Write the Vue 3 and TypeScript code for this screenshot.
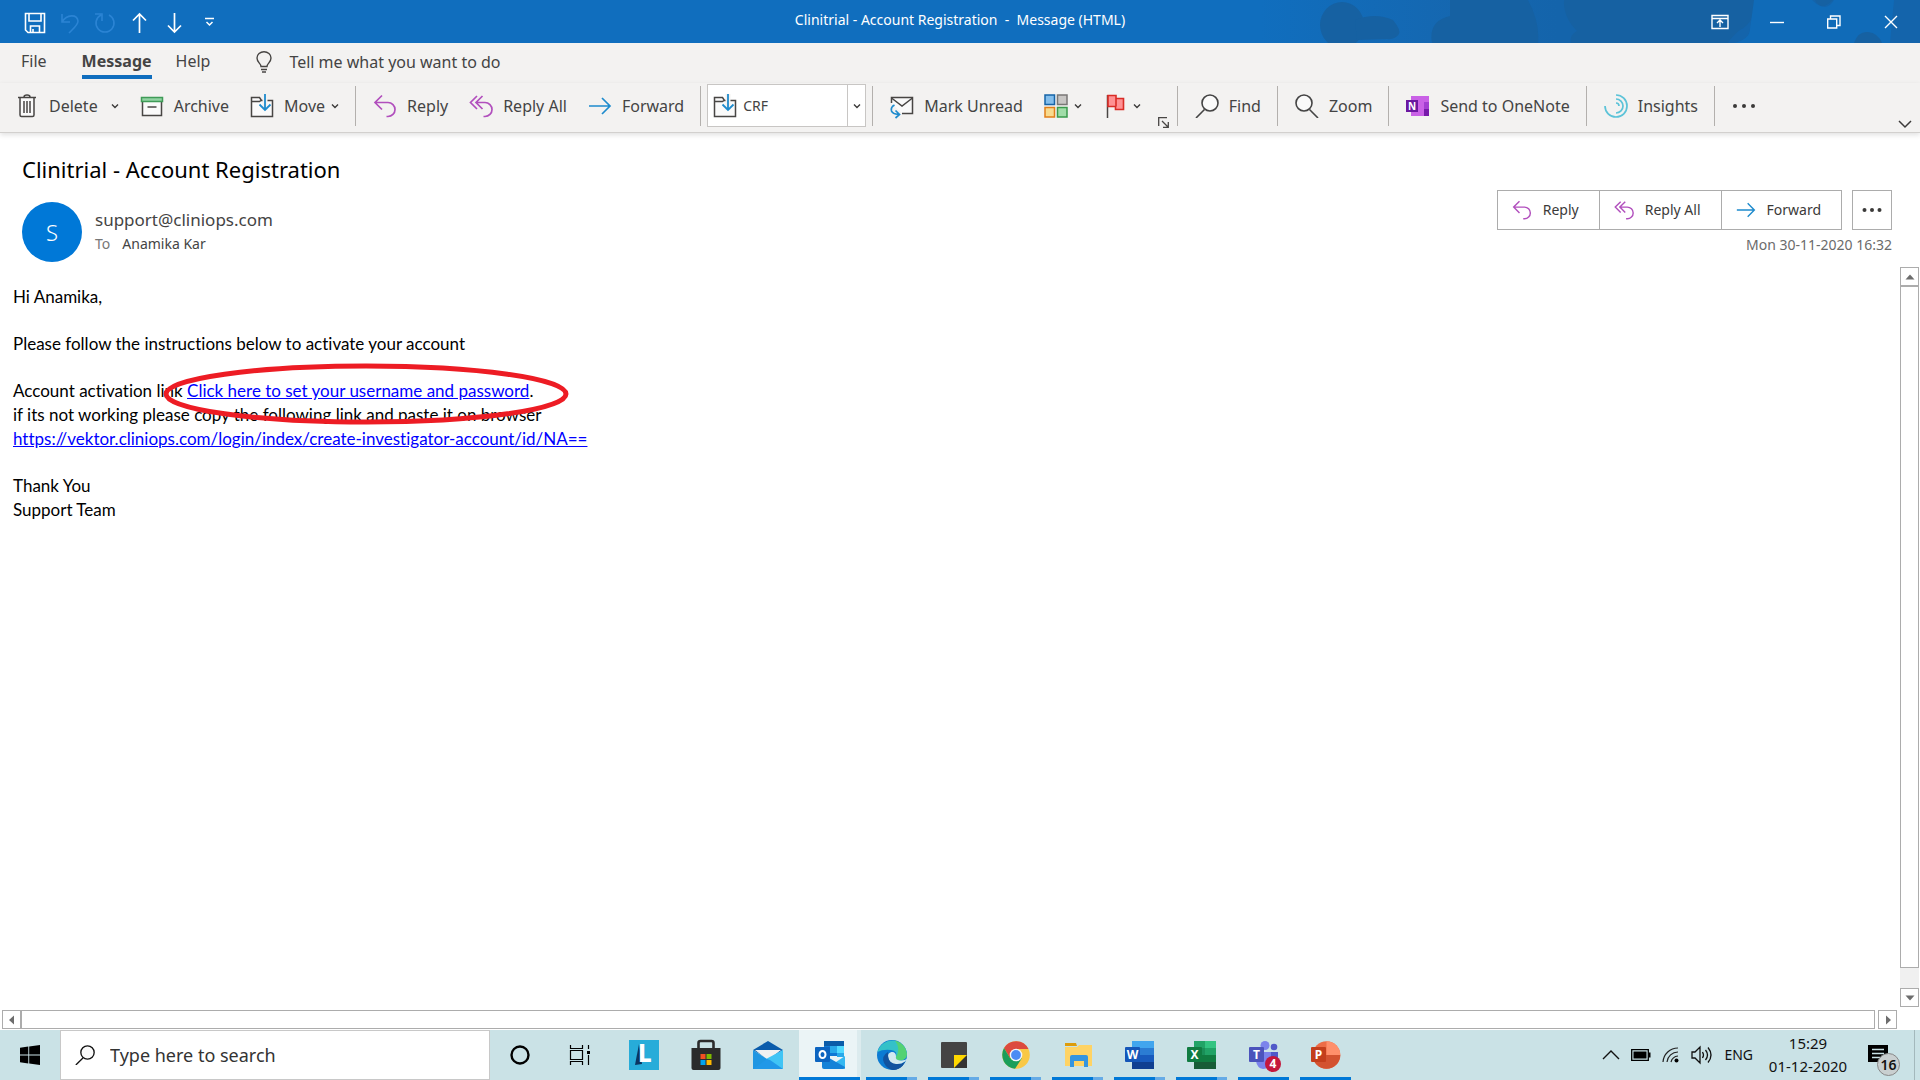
<script setup lang="ts">
interface TaskApp {
  id: string
  label: string
  state: 'idle' | 'active' | 'open' | 'stacked'
}

const taskApps: TaskApp[] = [
  { id: 'l', label: 'L', state: 'idle' },
  { id: 'store', label: 'Microsoft Store', state: 'idle' },
  { id: 'mail', label: 'Mail', state: 'idle' },
  { id: 'outlook', label: 'Outlook', state: 'active' },
  { id: 'edge', label: 'Edge', state: 'stacked' },
  { id: 'sticky', label: 'Sticky Notes', state: 'stacked' },
  { id: 'chrome', label: 'Chrome', state: 'stacked' },
  { id: 'explorer', label: 'File Explorer', state: 'stacked' },
  { id: 'word', label: 'Word', state: 'stacked' },
  { id: 'excel', label: 'Excel', state: 'stacked' },
  { id: 'teams', label: 'Teams', state: 'open' },
  { id: 'powerpoint', label: 'PowerPoint', state: 'open' },
]
</script>

<template>
  <div class="window">
    <svg class="defs" aria-hidden="true">
      <symbol id="i-reply" viewBox="0 0 24 24">
        <path d="M9 1.500 2 8.500l7 7M2 8.500h13a7 7 0 0 1 0 14h-1.500" fill="none" stroke="#b14fbd" stroke-width="1.700" />
      </symbol>
      <symbol id="i-reply-all" viewBox="0 0 24 24">
        <path d="M8 2 1.500 8.500 8 15M13.500 2 7 8.500l6.500 6.500M7 8.500h9a7 7 0 0 1 0 14h-1.500" fill="none" stroke="#b14fbd" stroke-width="1.700" />
      </symbol>
      <symbol id="i-forward" viewBox="0 0 24 24">
        <path d="M1 12h21M14 4l8 8-8 8" fill="none" stroke="#1e8bcd" stroke-width="1.700" />
      </symbol>
      <symbol id="i-folder" viewBox="0 0 24 24">
        <path d="M1.500 3.500h8l2 3h11v16h-21zM1.500 7.500h8l2-1.500" fill="#fafafa" stroke="#484644" stroke-width="1.500" />
        <path d="M15 0v16" stroke="#f3f2f1" stroke-width="5" />
        <path d="M15 0v16M9.500 10.500l5.500 5.500 5.500-5.500" fill="none" stroke="#1e8bcd" stroke-width="1.800" />
      </symbol>
      <symbol id="i-chevron" viewBox="0 0 8 8">
        <path d="M1 2.500 4 5.500l3-3" fill="none" stroke="#3b3a39" stroke-width="1.400" />
      </symbol>
      <symbol id="i-lens" viewBox="0 0 24 24">
        <path d="M9.500 15.500 1 24" stroke="currentColor" stroke-width="1.600" />
        <circle cx="15" cy="9" r="8" fill="#fafafa" stroke="currentColor" stroke-width="1.600" />
      </symbol>
    </svg>

    <header class="titlebar">
      <svg class="art" viewBox="0 0 660 43" preserveAspectRatio="xMaxYMid slice" aria-hidden="true">
        <defs>
          <linearGradient id="fade">
            <stop offset="0" stop-color="#1567b0" stop-opacity="0" />
            <stop offset=".3" stop-color="#1567b0" />
            <stop offset=".45" stop-color="#1464ab" />
            <stop offset="1" stop-color="#1464ab" />
          </linearGradient>
        </defs>
        <rect width="660" height="43" fill="url(#fade)" />
        <g fill="#1661a2">
          <ellipse cx="82" cy="25" rx="22" ry="23" />
          <path d="M95 20q20-8 38 0 8 10 6 14-4 6-12 5l-30 1z" />
          <path d="M190 0h78q12 22 10 43H172q-4-22 18-27z" />
          <path d="M304 0h190q2 22-14 30-8 6-12 13H311q-2-8 6-12-14-14-13-31z" />
        </g>
        <path d="M494 0h58q14 14 22 0h60l-4 43H474q16-4 16-14 2-14 4-29z" fill="#106bb8" />
        <path d="M555 0h18q-12 12-18 0zM594 43q4-12 14-11t14 11z" fill="#1661a2" />
      </svg>
      <nav class="quick" aria-label="Quick access">
        <button aria-label="Save"><svg width="22" height="22" viewBox="0 0 22 22"><path d="M1.500 1.500h19v19H4l-2.500-2.500zM5 2v7h12V2M6.500 20v-6h9v6M9 17v3" fill="none" stroke="#fff" stroke-width="1.600" /></svg></button>
        <button aria-label="Undo"><svg width="22" height="22" viewBox="0 0 22 22"><path d="M3 2v8h8M3 10c5-8 15-8 16-1 0 4-4 7-9 12" fill="none" stroke="#2b84d4" stroke-width="1.600" /></svg></button>
        <button aria-label="Redo"><svg width="22" height="22" viewBox="0 0 22 22"><path d="M1 2h7v7M15 3a9 9 0 1 1-8 0" fill="none" stroke="#2b84d4" stroke-width="1.600" /></svg></button>
        <button aria-label="Previous item"><svg width="22" height="22" viewBox="0 0 22 22"><path d="M10.500 21V2M4 8.500 10.500 2 17 8.500" fill="none" stroke="#fff" stroke-width="1.700" /></svg></button>
        <button aria-label="Next item"><svg width="22" height="22" viewBox="0 0 22 22"><path d="M10.500 1v19M4 13.500l6.500 6.500 6.500-6.500" fill="none" stroke="#fff" stroke-width="1.700" /></svg></button>
        <button aria-label="Customise toolbar"><svg width="22" height="22" viewBox="0 0 22 22"><path d="M6 6.500h9M7.500 10l3 3 3-3" fill="none" stroke="#fff" stroke-width="1.500" /></svg></button>
      </nav>
      <h1>Clinitrial - Account Registration &nbsp;-&nbsp; Message (HTML)</h1>
      <div class="controls">
        <button aria-label="Ribbon display options"><svg width="18" height="16" viewBox="0 0 18 16"><path d="M1 1.500h16v13H1zM1 4.500h16M9 13V6.500M6 9l3-3 3 3" fill="none" stroke="#fff" stroke-width="1.400" /></svg></button>
        <button aria-label="Minimise"><svg width="14" height="14" viewBox="0 0 14 14"><path d="M0 7.500h14" stroke="#fff" stroke-width="1.400" /></svg></button>
        <button aria-label="Restore"><svg width="14" height="14" viewBox="0 0 14 14"><path d="M.7 4h9v9h-9zM3.500 4V1h9.500v9.500H10" fill="none" stroke="#fff" stroke-width="1.400" /></svg></button>
        <button aria-label="Close"><svg width="14" height="14" viewBox="0 0 14 14"><path d="m1 1 12 12M13 1 1 13" stroke="#fff" stroke-width="1.400" /></svg></button>
      </div>
    </header>

    <nav class="tabs">
      <button class="tab">File</button>
      <button class="tab current">Message</button>
      <button class="tab">Help</button>
      <label class="tell">
        <svg width="16" height="22" viewBox="0 0 16 22"><path d="M5 15.500c0-3-4-4-4-8.500a7 6.300 0 0 1 14 0c0 4.500-4 5.500-4 8.500zM5 18.500h6M6 21h4" fill="none" stroke="#484644" stroke-width="1.400" /></svg>
        <input type="text" aria-label="Tell me what you want to do" placeholder="Tell me what you want to do">
      </label>
    </nav>

    <div class="ribbon" role="toolbar">
      <button class="tool">
        <svg class="icon" viewBox="0 0 24 24"><path d="M4.500 4v17.500q0 1 1 1h12q1 0 1-1V4" fill="#fafafa" /><path d="M3 3.500h18M9 3q0-2 3-2t3 2M5 4v17q0 1.500 1.500 1.500h11Q19 22.500 19 21V4M9 7v12M12 7v12M15 7v12" fill="none" stroke="#484644" stroke-width="1.500" /></svg>
        Delete
        <svg class="chev apart"><use href="#i-chevron" /></svg>
      </button>
      <button class="tool">
        <svg class="icon" viewBox="0 0 24 24"><path d="M2.500 6v15.500h19V6" fill="#fafafa" stroke="#484644" stroke-width="1.500" /><path d="M1.500 3.500h21v4h-21z" fill="#92d3a3" stroke="#3f9b57" stroke-width="1.500" /><path d="M7.500 13h9" stroke="#484644" stroke-width="1.500" /></svg>
        Archive
      </button>
      <button class="tool">
        <svg class="icon"><use href="#i-folder" /></svg>
        Move
        <svg class="chev"><use href="#i-chevron" /></svg>
      </button>
      <span class="rule" />
      <button class="tool"><svg class="icon"><use href="#i-reply" /></svg>Reply</button>
      <button class="tool"><svg class="icon"><use href="#i-reply-all" /></svg>Reply All</button>
      <button class="tool"><svg class="icon"><use href="#i-forward" /></svg>Forward</button>
      <span class="rule" />
      <div class="steps">
        <svg class="icon"><use href="#i-folder" /></svg>
        <select aria-label="Quick step"><option>CRF</option></select>
        <span class="arrow"><svg class="chev"><use href="#i-chevron" /></svg></span>
      </div>
      <span class="rule" />
      <button class="tool">
        <svg class="icon" viewBox="0 0 24 24"><path d="M1.500 9V3.500h21v16H12" fill="#fafafa" stroke="#484644" stroke-width="1.500" /><path d="m1.500 4 10.500 8 10.500-8" fill="none" stroke="#484644" stroke-width="1.500" /><path d="M4.500 11q-4 2-3 6 1 3 7 3.500M5.500 16.500l4 4-4 3.500" fill="none" stroke="#1e8bcd" stroke-width="1.700" /></svg>
        Mark Unread
      </button>
      <button class="tool" aria-label="Categorise">
        <svg class="icon" viewBox="0 0 24 24"><g stroke-width="1.500"><path d="M1 1h9.500v9.500H1z" fill="#83beec" stroke="#1664a7" /><path d="M13.500 1H23v9.500h-9.500z" fill="#c8c6c4" stroke="#797775" /><path d="M1 13.500h9.500V23H1z" fill="#f8db8f" stroke="#e07f1a" /><path d="M13.500 13.500H23V23h-9.500z" fill="#a1dda9" stroke="#3a9a4c" /></g></svg>
        <svg class="chev"><use href="#i-chevron" /></svg>
      </button>
      <button class="tool" aria-label="Follow up">
        <svg class="icon" viewBox="0 0 24 24"><path d="M4.500 1v23" stroke="#484644" stroke-width="1.500" /><path d="M5 1.500h8v3h7.500v11h-8v-3H5zM13 4.500v8" fill="#ff9193" stroke="#d92c26" stroke-width="1.600" /></svg>
        <svg class="chev"><use href="#i-chevron" /></svg>
      </button>
      <button class="launcher" aria-label="More options"><svg width="11" height="11" viewBox="0 0 11 11"><path d="M.7 9V.7H9M4 4l6 6M10.300 5v5.300H5" fill="none" stroke="#484644" stroke-width="1.300" /></svg></button>
      <span class="rule" />
      <button class="tool"><svg class="icon"><use href="#i-lens" /></svg>Find</button>
      <span class="rule" />
      <button class="tool"><svg class="icon flip"><use href="#i-lens" /></svg>Zoom</button>
      <span class="rule" />
      <button class="tool">
        <svg class="icon" viewBox="0 0 24 24"><path d="M5 2h18v20H5z" fill="#c961e6" /><path d="M18 8h5v7h-5z" fill="#a33ed1" /><path d="M18 15h5v7h-5z" fill="#7719aa" /><path d="M0 6h12v12H0z" fill="#6b17a0" /><text x="6" y="15.500" text-anchor="middle" fill="#fff" font-size="10" font-weight="700">N</text></svg>
        Send to OneNote
      </button>
      <span class="rule" />
      <button class="tool">
        <svg class="icon" viewBox="0 0 24 24"><path d="M12 1a11 11 0 1 1-11 11M12 5a7 7 0 0 1 0 14M12 9a3 3 0 0 1 3 3" fill="none" stroke="#5cc3d8" stroke-width="1.700" /></svg>
        Insights
      </button>
      <span class="rule" />
      <button class="tool" aria-label="More commands"><svg width="24" height="6" viewBox="0 0 24 6"><g fill="#3b3a39"><circle cx="3" cy="3" r="2" /><circle cx="12" cy="3" r="2" /><circle cx="21" cy="3" r="2" /></g></svg></button>
      <button class="collapse" aria-label="Collapse the ribbon"><svg width="14" height="8" viewBox="0 0 14 8"><path d="m1 1 6 6 6-6" fill="none" stroke="#3b3a39" stroke-width="1.500" /></svg></button>
    </div>

    <main class="message">
      <section class="head">
        <div class="from">
          <h2>Clinitrial - Account Registration</h2>
          <div class="sender">
            <span class="avatar">S</span>
            <div>
              <p class="address">support@cliniops.com</p>
              <p class="to"><span>To</span>Anamika Kar</p>
            </div>
          </div>
        </div>
        <div class="reply">
          <div class="actions">
            <div class="joined">
              <button><svg class="small"><use href="#i-reply" /></svg>Reply</button>
              <button><svg class="small"><use href="#i-reply-all" /></svg>Reply All</button>
              <button><svg class="small"><use href="#i-forward" /></svg>Forward</button>
            </div>
            <button class="more" aria-label="More actions"><svg width="20" height="6" viewBox="0 0 20 6"><g fill="#3b3a39"><circle cx="2.500" cy="3" r="2" /><circle cx="10" cy="3" r="2" /><circle cx="17.500" cy="3" r="2" /></g></svg></button>
          </div>
          <time>Mon 30-11-2020 16:32</time>
        </div>
      </section>

      <div class="pane">
        <article class="body">
          <p>Hi Anamika,</p>
          <p>Please follow the instructions below to activate your account</p>
          <p class="marked">
            Account activation link <a href="#activate">Click here to set your username and password</a>.<br>
            if its not working please copy the following link and paste it on browser<br>
            <a href="#create">https://vektor.cliniops.com/login/index/create-investigator-account/id/NA==</a>
            <svg class="ring" width="408" height="64" viewBox="0 0 408 64" aria-hidden="true"><ellipse cx="204" cy="32" rx="200" ry="28" fill="none" stroke="#ed1c24" stroke-width="5" /></svg>
          </p>
          <p>Thank You<br>Support Team</p>
        </article>
        <div class="vbar">
          <button aria-label="Scroll up"><svg width="10" height="10" viewBox="0 0 10 10"><path d="M5 2.500 9.500 7.500h-9z" fill="#6d6d6d" /></svg></button>
          <span class="thumb" />
          <button aria-label="Scroll down"><svg width="10" height="10" viewBox="0 0 10 10"><path d="M.5 2.500h9L5 7.500z" fill="#6d6d6d" /></svg></button>
        </div>
      </div>
      <div class="hbar">
        <button aria-label="Scroll left"><svg width="10" height="10" viewBox="0 0 10 10"><path d="M7 .5v9L2 5z" fill="#6d6d6d" /></svg></button>
        <span class="thumb" />
        <button aria-label="Scroll right"><svg width="10" height="10" viewBox="0 0 10 10"><path d="M3 .5v9l5-4.500z" fill="#6d6d6d" /></svg></button>
      </div>
    </main>

    <footer class="taskbar">
      <button class="start" aria-label="Start"><svg width="20" height="20" viewBox="0 0 20 20"><path d="M0 2.800 8.300 1.600v7.900H0zM9.200 1.500 20 0v9.500H9.200zM0 10.400h8.300v8L0 17.200zM9.200 10.400H20V20L9.200 18.500z" /></svg></button>
      <label class="search">
        <svg class="glass"><use href="#i-lens" /></svg>
        <input type="text" aria-label="Search" placeholder="Type here to search">
      </label>
      <div class="system">
        <button aria-label="Cortana"><svg width="20" height="20" viewBox="0 0 20 20"><circle cx="10" cy="10" r="8.500" fill="none" stroke="#000" stroke-width="2.400" /></svg></button>
        <button aria-label="Task view"><svg width="22" height="20" viewBox="0 0 22 20"><path d="M1.500 0v3.500h12V0M1.500 5.500h12v9h-12zM1.500 20v-3.500h12V20M19.500 0v4M19.500 10v10" fill="none" stroke="#000" stroke-width="1.200" /><path d="M18 6h3v3h-3z" /></svg></button>
      </div>
      <button v-for="app in taskApps" :key="app.id" class="slot" :class="app.state" :aria-label="app.label">
        <svg width="30" height="30" viewBox="0 0 30 30">
          <g v-if="app.id === 'l'">
            <path d="M0 0h30v30H0z" fill="#27acd9" /><path d="m10 4-4 21 7-1z" fill="#0b3561" /><text x="9" y="22" font-size="24" font-weight="800" fill="#fff">L</text>
          </g>
          <g v-else-if="app.id === 'store'">
            <path d="M7.500 9V3q0-2 2-2h11q2 0 2 2v6" fill="none" stroke="#2b2b2b" stroke-width="2.600" /><path d="M.5 8h29v20q0 2-2 2h-25q-2 0-2-2z" fill="#2b2b2b" />
            <path d="M9.500 14h5v5h-5z" fill="#f25022" /><path d="M15.500 14h5v5h-5z" fill="#7fba00" /><path d="M9.500 20h5v5h-5z" fill="#00a4ef" /><path d="M15.500 20h5v5h-5z" fill="#ffb900" />
          </g>
          <g v-else-if="app.id === 'mail'">
            <path d="M0 10 15 1l15 9-15 9z" fill="#0b5cab" /><path d="M2 10h26L15 20z" fill="#f1f1f1" /><path d="M0 10l14 9 16 10H0z" fill="#1f96e2" /><path d="M30 10v19L13 19z" fill="#40c4f5" /><path d="M0 29 14 19l3 1 13 9z" fill="#2198e8" />
          </g>
          <g v-else-if="app.id === 'outlook'">
            <path d="M9 1h20v15H9z" fill="#0f78d4" /><path d="M9 1h20v5H9z" fill="#0a5ba8" /><path d="M15 6h7v7h-7z" fill="#28a8ea" /><path d="M22 6h7v7h-7z" fill="#50d9ff" /><path d="M22 13h7v4h-7z" fill="#28a8ea" /><path d="m30 16-12 8 12 5z" fill="#35b8f1" /><path d="M7 14 30 27q0 2-2 2H9q-2 0-2-2z" fill="#1482d8" /><path d="M1 7h13q1 0 1 1v13q0 1-1 1H1q-1 0-1-1V8q0-1 1-1z" fill="#0c64c0" /><ellipse cx="7.500" cy="14.500" rx="3" ry="3.500" fill="none" stroke="#fff" stroke-width="2" />
          </g>
          <g v-else-if="app.id === 'edge'">
            <circle cx="15" cy="15" r="15" fill="#0c7bd3" />
            <path d="M.5 12A15 15 0 0 1 30 14q-.5 6-7 6.500-5 0-4-3.500 2-6-5-7Q6 9 .5 12z" fill="#35c1c8" />
            <path d="M18 .5A15 15 0 0 1 30 14q-.5 6-7 6.500-5 0-4-3.500 5-8-1-16.500z" fill="#5bd65e" opacity=".8" />
            <path d="M11 12q-7 4-4 11 3 6 9 7 8 0 12-8-5 3-10 1-7-3-7-11z" fill="#12539f" />
            <path d="M19 16.500q0-5-4.500-4.500-4 1-3.500 5 1 6 8 7 5 .500 9-2.500l2.500-3q-3 2.500-7.500 2-5-.500-4-4z" fill="#d2e9ef" />
            <path d="M11 15q0 8 8 10 5 1 9-3-4 7-12 8-8-4-8-10 0-4 3-5z" fill="#12539f" />
          </g>
          <g v-else-if="app.id === 'sticky'">
            <path d="M3 2h24q1 0 1 1v12L16 28H3q-1 0-1-1V3q0-1 1-1z" fill="#444" /><path d="M15 28V15h13v13z" fill="#333" /><path d="M15 15h13L15 28z" fill="#ffd800" />
          </g>
          <g v-else-if="app.id === 'chrome'">
            <circle cx="15" cy="15" r="13.800" fill="#f9c846" /><path d="M3 8a14 14 0 0 1 24.500 1H15l-6 9z" fill="#dc4a3e" /><path d="M3 8a14 14 0 0 0 11 20.800L21 18l-6 3-6-3z" fill="#1a9e5a" /><circle cx="15" cy="15" r="6.300" fill="#f1f5fb" /><circle cx="15" cy="15" r="4.900" fill="#4b8bf4" />
          </g>
          <g v-else-if="app.id === 'explorer'">
            <path d="M2 3h11l1 3h-12z" fill="#dd9c0c" /><path d="M2 7h12l2-2h13v21H2z" fill="#ffd364" /><path d="M7 27V17q0-2 2-2h14q2 0 2 2v10h-4v-6H11v6z" fill="#3595df" />
          </g>
          <g v-else-if="app.id === 'word'">
            <path d="M7 1h22v7H7z" fill="#41a5ee" /><path d="M7 8h22v7H7z" fill="#2b7cd3" /><path d="M7 15h22v7H7z" fill="#185abd" /><path d="M7 22h22v7H7z" fill="#103f91" /><rect y="7" width="15" height="15" rx="1" fill="#1556b8" /><text x="7.500" y="19" text-anchor="middle" font-size="12" font-weight="700" fill="#fff">W</text>
          </g>
          <g v-else-if="app.id === 'excel'">
            <path d="M7 1h11v7H7z" fill="#21a366" /><path d="M18 1h11v7H18z" fill="#33c481" /><path d="M7 8h11v7H7z" fill="#1a8f58" /><path d="M18 8h11v7H18z" fill="#21a366" /><path d="M7 15h22v7H7z" fill="#107c41" /><path d="M7 22h22v7H7z" fill="#185c37" /><rect y="7" width="15" height="15" rx="1" fill="#107c41" /><text x="7.500" y="19" text-anchor="middle" font-size="12" font-weight="700" fill="#fff">X</text>
          </g>
          <g v-else-if="app.id === 'teams'">
            <circle cx="16" cy="5.500" r="4.500" fill="#7b83eb" /><circle cx="25" cy="7" r="3.300" fill="#5059c9" /><path d="M20 12h9v9q-1 4-6 4z" fill="#5059c9" /><path d="M7 12h15v9q-1 8-8 8-6-1-7-8z" fill="#7b83eb" /><rect y="7" width="15" height="15" rx="1" fill="#4b53bc" /><text x="7.500" y="19" text-anchor="middle" font-size="12" font-weight="700" fill="#fff">T</text>
          </g>
          <g v-else>
            <circle cx="15.500" cy="15" r="13.800" fill="#ed6c47" /><path d="M15.500 1.200A13.800 13.800 0 0 1 29.300 15H15.500z" fill="#ff8f6b" /><path d="M1.700 15h27.600a13.800 13.800 0 0 1-27.600 0z" fill="#d35230" /><rect y="7" width="15" height="15" rx="1" fill="#c43e1c" /><text x="7.500" y="19" text-anchor="middle" font-size="12" font-weight="700" fill="#fff">P</text>
          </g>
        </svg>
        <span v-if="app.id === 'teams'" class="count">4</span>
      </button>

      <div class="tray">
        <button aria-label="Hidden icons"><svg width="18" height="10" viewBox="0 0 18 10"><path d="m1 9 8-8 8 8" fill="none" stroke="#111" stroke-width="1.400" /></svg></button>
        <button aria-label="Battery"><svg width="20" height="12" viewBox="0 0 20 12"><path d="M.7.700h16.600v10.600H.7z" fill="none" stroke="#000" stroke-width="1.300" /><path d="M2.500 2.500h13v7h-13zM17.500 3.500H19.500v5h-2z" /></svg></button>
        <button aria-label="Network"><svg width="18" height="18" viewBox="0 0 18 18"><g fill="none" stroke="#222" stroke-width="1.200"><path d="M1 16A15 15 0 0 1 16 2M5 16A11 11 0 0 1 16 6M9 16a8 8 0 0 1 7-6" /></g><circle cx="14.500" cy="14.500" r="2" /></svg></button>
        <button aria-label="Volume"><svg width="22" height="18" viewBox="0 0 22 18"><path d="M1 6h3l5-5v16l-5-5H1zM11.500 6q2 3 0 6M14.500 4q4 5 0 10M17 1.500q6 7.500 0 15" fill="none" stroke="#111" stroke-width="1.300" /></svg></button>
        <button class="lang">ENG</button>
        <button class="clock"><span>15:29</span><span>01-12-2020</span></button>
        <button class="notes" aria-label="Notifications"><svg width="20" height="20" viewBox="0 0 20 20"><path d="M0 0h20v17h-4v3l-4-3H0z" /><path d="M4 4.500h12M4 8.500h12M4 12.500h8" stroke="#cae2e6" stroke-width="1.300" /></svg><span class="badge">16</span></button>
        <button class="desktop" aria-label="Show desktop" />
      </div>
    </footer>
  </div>
</template>

<style>
body {
  margin: 0;
}
</style>

<style scoped>
.window {
  display: flex;
  flex-direction: column;
  height: 100vh;
  overflow: hidden;
  background: #fff;
  color: #444;
  font: 16px/24px "Noto Sans", "Open Sans", sans-serif;
}
.window * {
  box-sizing: border-box;
}
.defs {
  position: absolute;
  width: 0;
  height: 0;
}
button,
input,
select {
  margin: 0;
  padding: 0;
  border: 0;
  border-radius: 0;
  background: none;
  color: inherit;
  font: inherit;
  outline: 0;
}
button {
  display: flex;
  align-items: center;
  justify-content: center;
  white-space: nowrap;
  flex: none;
}
svg {
  display: block;
  flex: none;
  overflow: visible;
}
h1,
h2,
p {
  margin: 0;
  font-weight: 400;
}

/* title bar */
.titlebar {
  position: relative;
  display: grid;
  grid-template-columns: 1fr auto 1fr;
  align-items: center;
  height: 43px;
  flex: none;
  background: #106ebe;
  color: #fff;
}
.art {
  position: absolute;
  right: 0;
  top: 0;
  width: 660px;
  height: 43px;
  overflow: hidden;
}
.quick {
  display: flex;
  gap: 13px;
  padding: 3px 0 0 24px;
}
.titlebar h1 {
  position: relative;
  padding-bottom: 3px;
  font-size: 14px;
}
.controls {
  position: relative;
  display: flex;
  justify-content: flex-end;
  padding-right: 1px;
}
.controls button {
  width: 57px;
  height: 43px;
}

/* ribbon */
.tabs {
  display: flex;
  align-items: center;
  height: 40px;
  flex: none;
  padding-left: 21px;
  background: #f3f2f1;
}
.tab {
  height: 32px;
  margin-right: 24px;
  padding-bottom: 4px;
}
.tab:first-child {
  margin-right: 35px;
}
.tab.current {
  padding-bottom: 0;
  border-bottom: 4px solid #106ebe;
  font-weight: 700;
}
.tell {
  display: flex;
  align-items: center;
  gap: 17px;
  margin-left: 22px;
  padding-bottom: 2px;
}
.tell input {
  width: 320px;
}
input::placeholder {
  color: inherit;
  opacity: 1;
}
.ribbon {
  position: relative;
  z-index: 1;
  display: flex;
  align-items: center;
  height: 50px;
  flex: none;
  padding: 0 8px 4px 4px;
  border-bottom: 1px solid #d2d0ce;
  background: #f3f2f1;
  box-shadow: 0 2px 5px rgba(0, 0, 0, 0.12);
}
.tool {
  gap: 10px;
  height: 42px;
  padding: 0 10px 0 11px;
}
.icon {
  width: 24px;
  height: 24px;
}
.flip {
  transform: scaleX(-1);
}
.chev {
  width: 8px;
  height: 8px;
}
.tool .chev {
  margin-left: -4px;
}
.tool .chev.apart {
  margin-left: 3px;
}
.rule {
  width: 1px;
  height: 40px;
  margin: 0 6px;
  background: #b3b0ad;
}
.steps {
  display: flex;
  align-items: center;
  width: 159px;
  height: 43px;
  padding-left: 5px;
  border: 1px solid #c8c6c4;
  background: #fff;
  font-size: 14px;
}
.steps select {
  flex: 1;
  min-width: 0;
  padding-left: 6px;
  appearance: none;
}
.arrow {
  display: flex;
  align-items: center;
  justify-content: center;
  align-self: stretch;
  width: 18px;
  border-left: 1px solid #c8c6c4;
}
.launcher {
  align-self: flex-end;
  margin: 0 2px 0 7px;
}
.collapse {
  align-self: flex-end;
  margin-left: auto;
}

/* message header */
.message {
  display: flex;
  flex-direction: column;
  flex: 1;
  min-height: 0;
}
.head {
  display: flex;
  justify-content: space-between;
  padding: 20px 28px 5px 22px;
}
.head h2 {
  color: #000;
  font-size: 22px;
  line-height: 32px;
}
.sender {
  display: flex;
  align-items: center;
  gap: 13px;
  margin-top: 17px;
}
.avatar {
  display: flex;
  align-items: center;
  justify-content: center;
  width: 60px;
  height: 60px;
  border-radius: 50%;
  background: #0078d7;
  color: #fff;
  font-size: 22px;
  font-weight: 300;
}
.address {
  font-size: 17px;
}
.to {
  font-size: 14px;
}
.to span {
  margin-right: 12px;
  color: #777;
}
.reply {
  display: flex;
  flex-direction: column;
  align-items: flex-end;
  gap: 3px;
  padding-top: 37px;
  color: #3b3a39;
  font-size: 14px;
}
.actions,
.joined {
  display: flex;
}
.actions {
  gap: 10px;
}
.joined {
  border: 1px solid #acacac;
}
.joined button {
  gap: 11px;
  height: 38px;
  padding: 0 20px 0 14px;
}
.joined button + button {
  border-left: 1px solid #acacac;
}
.small {
  width: 20px;
  height: 20px;
}
.more {
  width: 40px;
  border: 1px solid #acacac;
}
time {
  color: #6b6b6b;
}

/* message body */
.pane {
  display: flex;
  flex: 1;
  min-height: 0;
}
.body {
  flex: 1;
  min-width: 0;
  padding: 18px 13px;
  color: #000;
  font: 17px/24px Lato, "Open Sans", sans-serif;
  font-variant-ligatures: none;
}
.body p {
  margin-bottom: 23px;
}
.body a {
  color: #00f;
}
.marked {
  position: relative;
}
.ring {
  position: absolute;
  left: 149px;
  top: -17px;
}
.vbar {
  display: flex;
  flex-direction: column;
  width: 19px;
  margin-right: 1px;
  background: #f0f0f0;
}
.vbar button,
.hbar button {
  width: 19px;
  height: 19px;
  border: 1px solid #acacac;
  background: #fff;
}
.thumb {
  flex: 1;
  border: 1px solid #acacac;
  background: #fff;
}
.vbar .thumb {
  margin-bottom: 20px;
}
.hbar {
  display: flex;
  flex: none;
  padding: 3px 23px 1px 2px;
}
.hbar .thumb {
  margin-right: 3px;
}

/* taskbar */
.taskbar {
  display: flex;
  height: 50px;
  flex: none;
  background: #cae2e6;
  color: #111;
}
.start {
  width: 60px;
}
.search {
  display: flex;
  align-items: center;
  gap: 15px;
  width: 430px;
  padding: 0 14px;
  border: 1px solid #c8c8c8;
  background: #fff;
}
.search input {
  flex: 1;
  min-width: 0;
  color: #333;
  font-size: 18px;
}
.glass {
  width: 20px;
  height: 20px;
}
.system {
  display: flex;
  margin-right: 3px;
}
.system button {
  width: 60px;
}
.slot {
  position: relative;
  width: 62px;
}
.slot.active {
  background: #ebf4f6;
  box-shadow: inset -4px 0 #dcebee;
}
.slot.active::after,
.slot.open::after,
.slot.stacked::after {
  content: "";
  position: absolute;
  bottom: 0;
  left: 5px;
  width: 51px;
  height: 3px;
  background: #0078d7;
}
.slot.active::after {
  left: 0;
  width: 61px;
}
.slot.stacked::after {
  background: linear-gradient(90deg, #0078d7 41px, #66abe6 41px);
}
.count {
  position: absolute;
  left: 32px;
  top: 26px;
  width: 16px;
  height: 16px;
  border-radius: 50%;
  background: #c4183c;
  color: #fff;
  font-size: 12px;
  font-weight: 700;
  line-height: 16px;
}
.tray {
  display: flex;
  align-items: center;
  gap: 11px;
  margin-left: auto;
  font-size: 14px;
}
.clock {
  flex-direction: column;
  width: 78px;
  margin: 0 10px 0 5px;
  font-size: 15px;
  line-height: 23px;
}
.notes {
  position: relative;
  justify-content: flex-start;
  width: 35px;
}
.badge {
  position: absolute;
  left: 9px;
  top: 8px;
  width: 23px;
  height: 23px;
  border: 1px solid #888;
  border-radius: 50%;
  background: #c9cfd0;
  font-size: 14px;
  font-weight: 600;
  line-height: 21px;
}
.desktop {
  width: 6px;
  height: 50px;
  border-left: 1px solid #a3b8bc;
}
</style>
